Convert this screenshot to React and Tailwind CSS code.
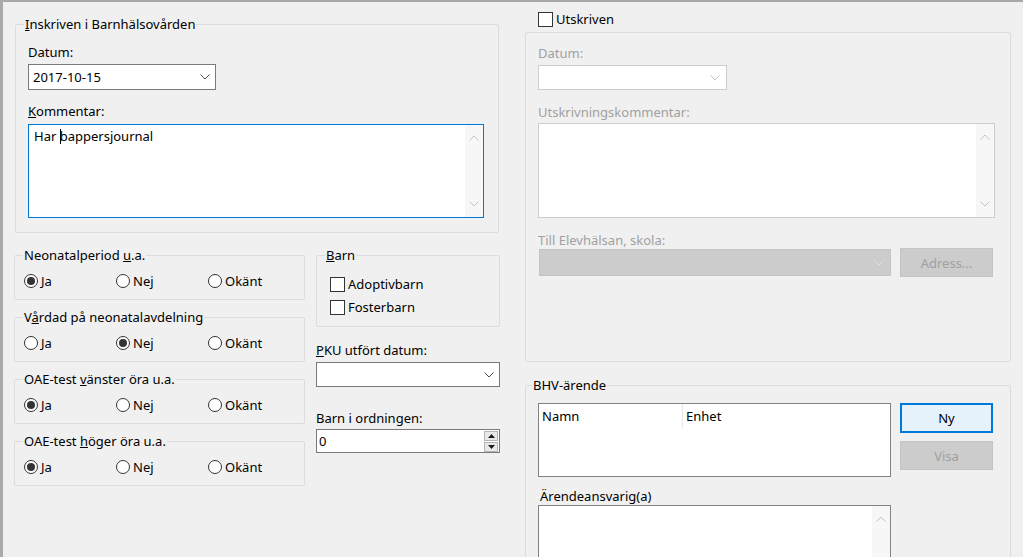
import React from 'react';

const Chevron = ({ color = '#5f5f5f', up = false }) => (
  <svg width="10" height="6" viewBox="0 0 10 6" className="block">
    <polyline
      points={up ? '0.5,5.5 5,1 9.5,5.5' : '0.5,0.5 5,5 9.5,0.5'}
      fill="none"
      stroke={color}
      strokeWidth="1"
    />
  </svg>
);

const Radio = ({ label, checked }) => (
  <div className="w-[92px] flex items-center gap-[3px] h-[16px]">
    <span className="w-[14px] h-[14px] rounded-full border border-[#333333] bg-white flex items-center justify-center shrink-0">
      {checked && <span className="w-[8px] h-[8px] rounded-full bg-[#333333]" />}
    </span>
    <span>{label}</span>
  </div>
);

const Check = ({ children, disabled }) => (
  <div className="flex items-center gap-[3px] h-[16px]">
    <span className={`w-[15px] h-[15px] border bg-white shrink-0 ${disabled ? 'border-[#bcbcbc]' : 'border-[#333333]'}`} />
    <span>{children}</span>
  </div>
);

const Group = ({ legend, className = '', children }) => (
  <fieldset className={`border border-[#dcdcdc] rounded-[2px] ${className}`}>
    <legend className="ml-[8px] px-[1px] leading-[16px]">{legend}</legend>
    {children}
  </fieldset>
);

const RadioGroup = ({ legend, value }) => (
  <Group legend={legend} className="w-[291px]">
    <div className="flex pl-[9px] pt-[10px] pb-[10px]">
      <Radio label="Ja" checked={value === 'ja'} />
      <Radio label="Nej" checked={value === 'nej'} />
      <Radio label="Okänt" checked={value === 'okant'} />
    </div>
  </Group>
);

const ScrollCol = ({ color = '#c4c4c4' }) => (
  <div className="w-[18px] h-full bg-[#f7f7f7] flex flex-col items-center justify-between py-[10px]">
    <Chevron up color={color} />
    <Chevron color={color} />
  </div>
);

export default function App() {
  return (
    <div className="w-[1023px] h-[557px] overflow-hidden bg-[#f0f0f0] border-l-[3px] border-t-[2px] border-[#a9a9a9] flex text-[13px] leading-[16px] text-black font-['Noto_Sans',sans-serif]">
      {/* left column */}
      <div className="w-[497px] pl-[11px] pt-[14px] shrink-0">
        <Group legend={<><u>I</u>nskriven i Barnhälsovården</>} className="ml-[1px] w-[484px]">
          <div className="px-[12px] pb-[14px]">
            <div className="mt-[12px]">Datum:</div>
            <div className="mt-[4px] w-[188px] h-[26px] bg-white border border-[#7a7a7a] flex items-center justify-between pl-[4px] pr-[5px]">
              <span>2017-10-15</span>
              <Chevron color="#4d4d4d" />
            </div>
            <div className="mt-[13px]"><u>K</u>ommentar:</div>
            <div className="mt-[5px] w-[456px] h-[94px] bg-white border border-[#0078d7] flex">
              <div className="flex-1 px-[5px] pt-[3px]">
                Har <span className="inline-block w-px h-[15px] bg-black align-[-3px] -mr-px" />bappersjournal
              </div>
              <ScrollCol />
            </div>
          </div>
        </Group>

        <div className="mt-[14px] flex">
          <div className="flex flex-col gap-[9px]">
            <RadioGroup legend={<>Neonatalperiod <u>u</u>.a.</>} value="ja" />
            <RadioGroup legend={<>V<u>å</u>rdad på neonatalavdelning</>} value="nej" />
            <RadioGroup legend={<>OAE-test <u>v</u>änster öra u.a.</>} value="ja" />
            <RadioGroup legend={<>OAE-test <u>h</u>öger öra u.a.</>} value="ja" />
          </div>

          <div className="ml-[11px] w-[184px]">
            <Group legend={<><u>B</u>arn</>} className="w-[184px]">
              <div className="pl-[13px] pt-[13px] pb-[11px] flex flex-col gap-[7px]">
                <Check>Adoptivbarn</Check>
                <Check>Fosterbarn</Check>
              </div>
            </Group>
            <div className="mt-[15px]"><u>P</u>KU utfört datum:</div>
            <div className="mt-[4px] h-[25px] bg-white border border-[#7a7a7a] flex items-center justify-end pr-[5px]">
              <Chevron color="#4d4d4d" />
            </div>
            <div className="mt-[23px]">Barn i ordningen:</div>
            <div className="mt-[3px] h-[24px] bg-white border border-[#7a7a7a] flex justify-between">
              <span className="pl-[2px] pt-[3px]">0</span>
              <div className="flex flex-col gap-px pt-px pr-px">
                <div className="w-[14px] h-[10px] bg-[#e9e9e9] border border-[#b4b4b4] flex items-center justify-center">
                  <svg width="7" height="4" viewBox="0 0 7 4"><polygon points="0,4 3.5,0 7,4" fill="#1a1a1a" /></svg>
                </div>
                <div className="w-[14px] h-[10px] bg-[#e9e9e9] border border-[#b4b4b4] flex items-center justify-center">
                  <svg width="7" height="4" viewBox="0 0 7 4"><polygon points="0,0 3.5,4 7,0" fill="#1a1a1a" /></svg>
                </div>
              </div>
            </div>
          </div>
        </div>
      </div>

      {/* right column */}
      <div className="ml-[25px] w-[486px] pt-[9px] shrink-0">
        <div className="ml-[13px]">
          <Check>Utskriven</Check>
        </div>
        <div className="mt-[5px] h-[330px] border border-[#dcdcdc] rounded-[2px] pl-[12px] text-[#a0a0a0]">
          <div className="mt-[12px]">Datum:</div>
          <div className="mt-[4px] w-[189px] h-[25px] bg-white border border-[#cccccc] flex items-center justify-end pr-[6px]">
            <Chevron color="#c4c4c4" />
          </div>
          <div className="mt-[14px]">Utskrivningskommentar:</div>
          <div className="mt-[3px] w-[457px] h-[95px] bg-white border border-[#cccccc] flex justify-end">
            <ScrollCol />
          </div>
          <div className="mt-[14px]">Till Elevhälsan, skola:</div>
          <div className="flex items-center">
            <div className="w-[352px] h-[27px] bg-[#cccccc] border border-[#c4c4c4] flex items-center justify-end pr-[6px] ml-px">
              <Chevron color="#e0e0e0" />
            </div>
            <div className="ml-[9px] w-[93px] h-[29px] bg-[#cccccc] border border-[#c4c4c4] flex items-center justify-center">
              Adress...
            </div>
          </div>
        </div>

        <fieldset className="mt-[15px] border border-[#dcdcdc] rounded-[2px]">
          <legend className="ml-[6px] px-[1px] leading-[16px]">BHV-ärende</legend>
          <div className="pl-[12px] pt-[10px]">
            <div className="flex">
              <div className="w-[353px] h-[74px] bg-white border border-[#828282]">
                <div className="flex h-[24px] items-center">
                  <div className="w-[144px] pl-[3px] h-full flex items-center border-r border-[#e5e5e5]">Namn</div>
                  <div className="pl-[3px]">Enhet</div>
                </div>
              </div>
              <div className="ml-[9px] w-[93px] flex flex-col gap-[8px]">
                <div className="h-[30px] bg-[#e5f1fb] border-2 border-[#0078d7] flex items-center justify-center">Ny</div>
                <div className="h-[29px] bg-[#cccccc] border border-[#c4c4c4] text-[#a0a0a0] flex items-center justify-center">Visa</div>
              </div>
            </div>
            <div className="mt-[11px] ml-[2px]">Ärendeansvarig(a)</div>
            <div className="mt-px w-[353px] h-[90px] bg-white border border-[#828282] flex justify-end">
              <div className="w-[18px] h-full bg-[#f7f7f7] flex flex-col items-center pt-[10px]">
                <Chevron up color="#c4c4c4" />
              </div>
            </div>
          </div>
        </fieldset>
      </div>
    </div>
  );
}
